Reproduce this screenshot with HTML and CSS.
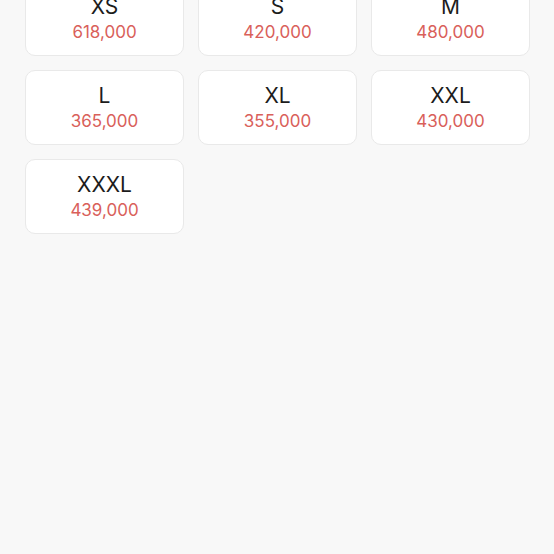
FILE: index.html
```html
<!DOCTYPE html>
<html lang="ko">
<head>
<meta charset="utf-8">
<link rel="stylesheet" href="styles.css">
</head>
<body>
<div class="grid">
  <div class="card"><div class="size">XS</div><div class="price">618,000</div></div>
  <div class="card"><div class="size">S</div><div class="price">420,000</div></div>
  <div class="card"><div class="size">M</div><div class="price">480,000</div></div>
  <div class="card"><div class="size">L</div><div class="price">365,000</div></div>
  <div class="card"><div class="size">XL</div><div class="price">355,000</div></div>
  <div class="card"><div class="size">XXL</div><div class="price">430,000</div></div>
  <div class="card"><div class="size">XXXL</div><div class="price">439,000</div></div>
</div>
</body>
</html>
```
FILE: styles.css
```css
html, body {
  margin: 0;
  padding: 0;
  background: #f8f8f8;
  height: 100%;
}
body {
  font-family: Inter, "Noto Sans", sans-serif;
}
.grid {
  display: grid;
  grid-template-columns: repeat(3, 159px);
  column-gap: 14px;
  row-gap: 14px;
  padding: 0 25px;
  margin-top: -19px;
}
.card {
  box-sizing: border-box;
  height: 75px;
  background: #fff;
  border: 1px solid #e9e9e9;
  border-radius: 10px;
  display: flex;
  flex-direction: column;
  align-items: center;
  padding-top: 12px;
}
.size {
  font-size: 21px;
  line-height: 25px;
  color: #1c1c1c;
}
.price {
  font-size: 17px;
  line-height: 22px;
  color: #d9605a;
  margin-top: 2px;
}
```
